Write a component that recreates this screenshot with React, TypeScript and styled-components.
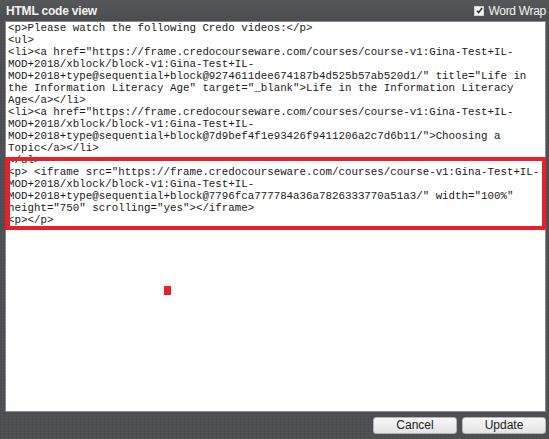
import React from "react";
import styled, { createGlobalStyle } from "styled-components";

const GlobalStyle = createGlobalStyle`
  html, body {
    margin: 0;
    padding: 0;
    background: #4d4e52;
  }
`;

const Dialog = styled.div`
  width: 549px;
  height: 439px;
  display: flex;
  flex-direction: column;
  background-color: #4e4f53;
  background-image: repeating-linear-gradient(
      0deg,
      rgba(255, 255, 255, 0.025) 0px,
      rgba(255, 255, 255, 0.025) 1px,
      transparent 1px,
      transparent 3px
    ),
    repeating-linear-gradient(
      90deg,
      rgba(0, 0, 0, 0.04) 0px,
      rgba(0, 0, 0, 0.04) 1px,
      transparent 1px,
      transparent 4px
    );
  font-family: "Liberation Sans", Arial, sans-serif;
  overflow: hidden;
`;

const TitleBar = styled.div`
  height: 21px;
  display: flex;
  align-items: center;
  justify-content: space-between;
  padding: 0 3px 0 6px;
  box-sizing: border-box;
  background: linear-gradient(#56575b, #4b4c50);
`;

const Title = styled.span`
  color: #f2f2f2;
  font-size: 12px;
  font-weight: bold;
  letter-spacing: -0.2px;
`;

const WrapToggle = styled.label`
  display: flex;
  align-items: center;
  gap: 4px;
  color: #f4f4f4;
  font-size: 12px;
  letter-spacing: -0.3px;
`;

const Check = styled.span`
  width: 8px;
  height: 8px;
  background: #f2f2f2;
  border: 1px solid #cfcfcf;
  display: flex;
  align-items: center;
  justify-content: center;
`;

const Editor = styled.div`
  position: relative;
  margin: 0 3px 0 5px;
  height: 391px;
  background: #ffffff;
  border: 1px solid #8a8a8a;
  box-sizing: border-box;
`;

const Code = styled.pre`
  margin: 0;
  padding: 0 2px;
  font-family: "Liberation Mono", "Courier New", monospace;
  font-size: 10.8px;
  line-height: 12px;
  color: #1a1a1a;
  white-space: pre;
`;

const Highlight = styled.div`
  position: absolute;
  left: -1px;
  top: 135px;
  width: 541px;
  height: 73px;
  border: 4px solid #e8202a;
  border-left-width: 5px;
  box-sizing: border-box;
`;

const Marker = styled.div`
  position: absolute;
  left: 158px;
  top: 264px;
  width: 7px;
  height: 9px;
  background: #e8202a;
`;

const Footer = styled.div`
  display: flex;
  justify-content: flex-end;
  gap: 5px;
  padding: 5px 3px 0 0;
`;

const Button = styled.button`
  width: 84px;
  height: 17px;
  padding: 0;
  border: 1px solid #b5b5b5;
  border-radius: 3px;
  background: linear-gradient(#f7f7f7, #e4e4e4);
  color: #222;
  font-family: "Liberation Sans", Arial, sans-serif;
  font-size: 12px;
  line-height: 15px;
`;

const lines = [
  "<p>Please watch the following Credo videos:</p>",
  "<ul>",
  '<li><a href="https://frame.credocourseware.com/courses/course-v1:Gina-Test+IL-',
  "MOD+2018/xblock/block-v1:Gina-Test+IL-",
  'MOD+2018+type@sequential+block@9274611dee674187b4d525b57ab520d1/" title="Life in',
  'the Information Literacy Age" target="_blank">Life in the Information Literacy',
  "Age</a></li>",
  '<li><a href="https://frame.credocourseware.com/courses/course-v1:Gina-Test+IL-',
  "MOD+2018/xblock/block-v1:Gina-Test+IL-",
  'MOD+2018+type@sequential+block@7d9bef4f1e93426f9411206a2c7d6b11/">Choosing a',
  "Topic</a></li>",
  "</ul>",
  '<p> <iframe src="https://frame.credocourseware.com/courses/course-v1:Gina-Test+IL-',
  "MOD+2018/xblock/block-v1:Gina-Test+IL-",
  'MOD+2018+type@sequential+block@7796fca777784a36a7826333770a51a3/" width="100%"',
  'height="750" scrolling="yes"></iframe>',
  "<p></p>",
];

export default function App() {
  return (
    <>
      <GlobalStyle />
      <Dialog>
        <TitleBar>
          <Title>HTML code view</Title>
          <WrapToggle>
            <Check>
              <svg width="7" height="7" viewBox="0 0 8 8">
                <path d="M1 4.2 L3 6.3 L7 1.2" stroke="#333" strokeWidth="1.8" fill="none" />
              </svg>
            </Check>
            Word Wrap
          </WrapToggle>
        </TitleBar>
        <Editor>
          <Code>{lines.join("\n")}</Code>
          <Highlight />
          <Marker />
        </Editor>
        <Footer>
          <Button>Cancel</Button>
          <Button>Update</Button>
        </Footer>
      </Dialog>
    </>
  );
}
